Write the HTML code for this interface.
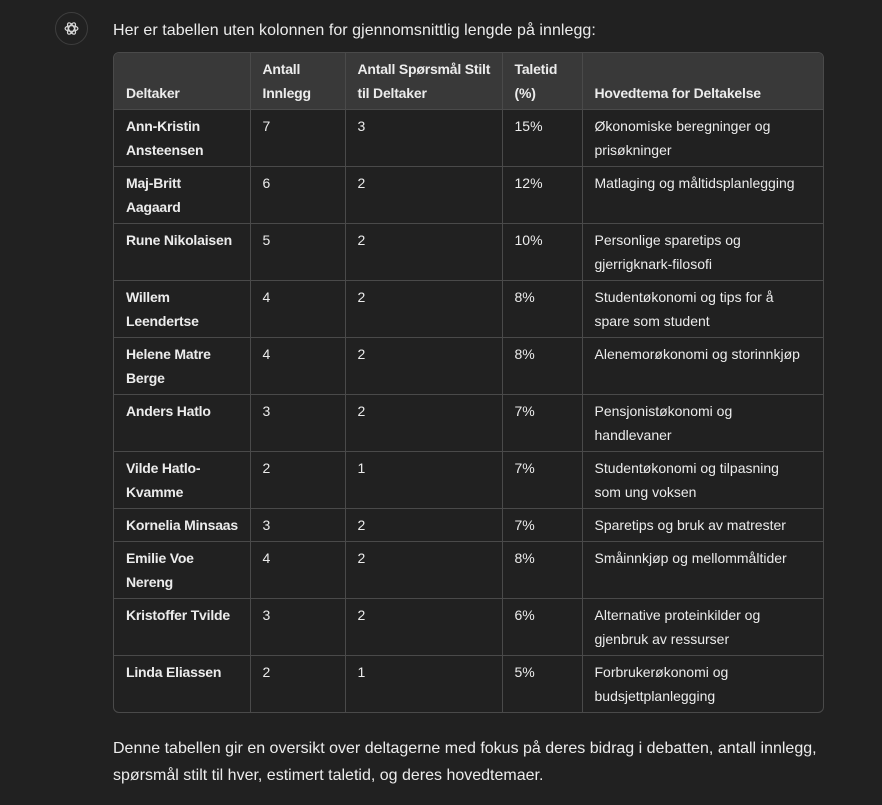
<!DOCTYPE html>
<html><head><meta charset="utf-8"><style>
html,body{margin:0;padding:0;background:#212121;width:882px;height:805px;overflow:hidden}
body{font-family:"Segoe UI","Liberation Sans",sans-serif;color:#ececec}
.av{position:absolute;left:55px;top:12px;width:33px;height:33px;border:1px solid #3e3e3e;border-radius:50%;box-sizing:border-box}
.av svg{position:absolute;left:7px;top:7px}
.p1{position:absolute;left:113px;top:19px;font-size:16px;line-height:24px;margin:0;letter-spacing:0.05px}
.tw{position:absolute;left:113px;top:52px;width:711px;border:1px solid #4a4a4a;border-radius:6px;overflow:hidden;box-sizing:border-box}
table{border-collapse:collapse;width:100%;font-size:14px;line-height:24px;table-layout:fixed}
th,td{text-align:left;vertical-align:top;padding:4px 12px 4px 12px;border-left:1px solid #4a4a4a;border-top:1px solid #4a4a4a;white-space:nowrap;overflow:hidden}
th:first-child,td:first-child{border-left:none}
thead th{border-top:none;background:#393939;vertical-align:bottom;font-weight:700;height:48px;letter-spacing:-0.2px}
td:first-child{font-weight:700;letter-spacing:-0.2px}
tbody td{height:48px}
tbody tr.s td{height:24px}
.p2{position:absolute;left:113px;top:735px;font-size:16px;line-height:27px;margin:0;width:720px}
</style></head><body>
<div class="av"><svg width="17" height="17" viewBox="-10 -10 20 20" fill="none" stroke="#d8d8d8" stroke-width="1.4">
<ellipse rx="7.5" ry="3.3" transform="rotate(0)"/><ellipse rx="7.5" ry="3.3" transform="rotate(60)"/><ellipse rx="7.5" ry="3.3" transform="rotate(120)"/></svg></div>
<p class="p1">Her er tabellen uten kolonnen for gjennomsnittlig lengde på innlegg:</p>
<div class="tw"><table>
<colgroup><col style="width:136px"><col style="width:95px"><col style="width:157px"><col style="width:80px"><col></colgroup>
<thead><tr><th>Deltaker</th><th>Antall<br>Innlegg</th><th>Antall Spørsmål Stilt<br>til Deltaker</th><th>Taletid<br>(%)</th><th>Hovedtema for Deltakelse</th></tr></thead>
<tbody>
<tr><td>Ann-Kristin<br>Ansteensen</td><td>7</td><td>3</td><td>15%</td><td>Økonomiske beregninger og<br>prisøkninger</td></tr>
<tr><td>Maj-Britt<br>Aagaard</td><td>6</td><td>2</td><td>12%</td><td>Matlaging og måltidsplanlegging</td></tr>
<tr><td>Rune Nikolaisen</td><td>5</td><td>2</td><td>10%</td><td>Personlige sparetips og<br>gjerrigknark-filosofi</td></tr>
<tr><td>Willem<br>Leendertse</td><td>4</td><td>2</td><td>8%</td><td>Studentøkonomi og tips for å<br>spare som student</td></tr>
<tr><td>Helene Matre<br>Berge</td><td>4</td><td>2</td><td>8%</td><td>Alenemorøkonomi og storinnkjøp</td></tr>
<tr><td>Anders Hatlo</td><td>3</td><td>2</td><td>7%</td><td>Pensjonistøkonomi og<br>handlevaner</td></tr>
<tr><td>Vilde Hatlo-<br>Kvamme</td><td>2</td><td>1</td><td>7%</td><td>Studentøkonomi og tilpasning<br>som ung voksen</td></tr>
<tr class="s"><td>Kornelia Minsaas</td><td>3</td><td>2</td><td>7%</td><td>Sparetips og bruk av matrester</td></tr>
<tr><td>Emilie Voe<br>Nereng</td><td>4</td><td>2</td><td>8%</td><td>Småinnkjøp og mellommåltider</td></tr>
<tr><td>Kristoffer Tvilde</td><td>3</td><td>2</td><td>6%</td><td>Alternative proteinkilder og<br>gjenbruk av ressurser</td></tr>
<tr><td>Linda Eliassen</td><td>2</td><td>1</td><td>5%</td><td>Forbrukerøkonomi og<br>budsjettplanlegging</td></tr>
</tbody></table></div>
<p class="p2">Denne tabellen gir en oversikt over deltagerne med fokus på deres bidrag i debatten, antall innlegg, spørsmål stilt til hver, estimert taletid, og deres hovedtemaer.</p>
</body></html>
